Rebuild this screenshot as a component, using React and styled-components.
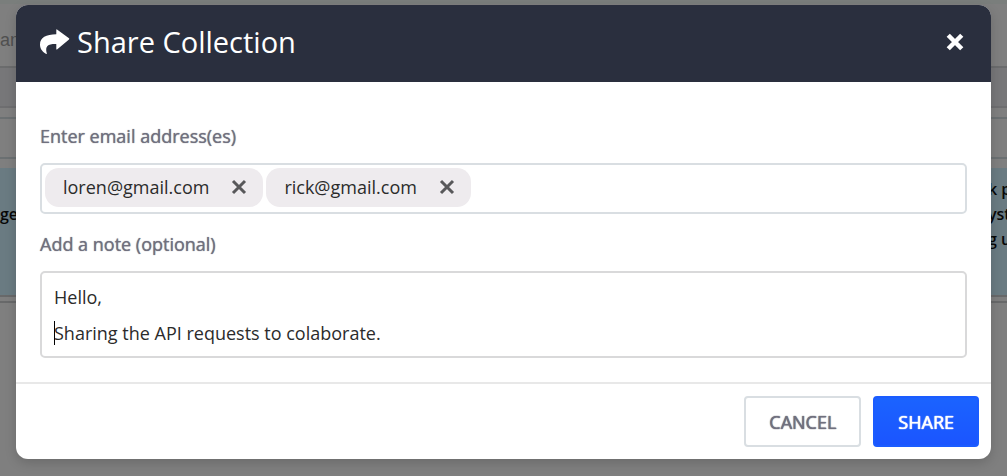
import React from "react";
import styled, { createGlobalStyle } from "styled-components";

const GlobalStyle = createGlobalStyle`
  * { box-sizing: border-box; }
  body {
    margin: 0;
    background: #7f7f7f;
    font-family: "Open Sans", "Noto Sans", sans-serif;
    font-size: 18px;
    color: #2b2b2b;
  }
  button, input, textarea { font: inherit; }
`;

const Page = styled.div`
  position: relative;
  min-height: 100vh;
  overflow: hidden;
`;

const Backdrop = styled.div`
  position: absolute;
  inset: 0;
  display: flex;
  flex-direction: column;
`;

const Band = styled.div`
  flex: none;
  display: flex;
  justify-content: space-between;
  align-items: flex-start;
  height: ${(p) => p.$height}px;
  padding-top: ${(p) => p.$top || 0}px;
  background: ${(p) => p.$color || "#7f7f7f"};
  border-bottom: ${(p) => (p.$line ? `2px solid ${p.$line}` : "0")};
`;

const Muted = styled.span`
  font-family: "Liberation Sans", sans-serif;
  line-height: 25px;
  color: #505050;
`;

const Cell = styled.div`
  flex: none;
  width: 19px;
  font-size: 16px;
  font-weight: 600;
  line-height: 25px;
  color: #080808;
  white-space: nowrap;
`;

const Overlay = styled.div`
  position: relative;
  padding: 5px 16px 17px;
`;

const Dialog = styled.form`
  border-radius: 12px;
  background: #fff;
  overflow: hidden;
  box-shadow: 0 4px 12px rgba(0, 0, 0, 0.16);
`;

const Header = styled.header`
  display: flex;
  align-items: center;
  height: 77px;
  padding: 0 27px 3px 24px;
  gap: 7px;
  background: #2a2f3e;
  color: #fff;
`;

const Title = styled.h1`
  flex: 1;
  margin: 0;
  font-size: 29px;
  font-weight: 400;
  line-height: 40px;
`;

const IconButton = styled.button`
  display: flex;
  padding: 0;
  border: 0;
  background: none;
  color: ${(p) => p.$color};
  cursor: pointer;
`;

const Body = styled.div`
  display: flex;
  flex-direction: column;
  padding: 42px 24px 24px;
`;

const Label = styled.label`
  margin-bottom: 14px;
  line-height: 25px;
  color: #70707e;
  text-shadow: 0 0 1px currentColor;
`;

const TagField = styled.div`
  display: flex;
  align-items: flex-start;
  gap: 3px;
  height: 51px;
  margin-bottom: 18px;
  padding: 3px;
  border: 2px solid #d9dee2;
  border-radius: 5px;
`;

const Tag = styled.span`
  display: flex;
  align-items: center;
  gap: 22px;
  height: 39px;
  padding: 0 16px 2px 18px;
  border-radius: 14px;
  background: #eeebee;
`;

const TagInput = styled.input`
  flex: 1;
  min-width: 0;
  height: 39px;
  border: 0;
  outline: 0;
  background: none;
`;

const NoteWrap = styled.div`
  position: relative;
  display: flex;
`;

const Note = styled.textarea`
  width: 100%;
  height: 87px;
  padding: 6px 12px 4px;
  border: 2px solid #d9d9da;
  border-radius: 5px;
  outline: 0;
  resize: none;
  overflow: hidden;
  line-height: 36px;
  color: inherit;
`;

const Caret = styled.span`
  position: absolute;
  left: 14px;
  top: 50px;
  width: 1px;
  height: 24px;
  background: #000;
`;

const Footer = styled.footer`
  display: flex;
  justify-content: flex-end;
  gap: 12px;
  padding: 12px;
  border-top: 2px solid #e8e8e8;
`;

const Button = styled.button`
  height: 51px;
  padding: 0 23px;
  border: 2px solid ${(p) => (p.$primary ? "#1b5cff" : "#d9dee2")};
  border-radius: 4px;
  background: ${(p) => (p.$primary ? "linear-gradient(#1b63ff, #1b55ff)" : "#fff")};
  color: ${(p) => (p.$primary ? "#fff" : "#70707e")};
  text-shadow: 0 0 1px currentColor, 0 0 1px currentColor;
  cursor: pointer;
`;

function ShareIcon() {
  return (
    <svg width="30" height="26" viewBox="0 0 30 26" fill="currentColor" aria-hidden="true">
      <path d="M17 .4 29 9.3Q29.600 9.900 29 10.500L17 20.500Q16.300 20.800 16.300 20V15.100C8 14.900 4.800 17 6.800 24.400Q6.800 25.500 5.800 24.800C1.500 22 0 19 0 15.500C0 8.500 6 5.300 16.300 5.200V.9Q16.300 0 17 .4Z" />
    </svg>
  );
}

function Cross({ size, stroke, cap = "butt" }) {
  return (
    <svg width={size} height={size} viewBox="0 0 16 16" stroke="currentColor" strokeWidth={stroke} strokeLinecap={cap} aria-hidden="true">
      <path d="M2 2 14 14M14 2 2 14" />
    </svg>
  );
}

const EMAILS = ["loren@gmail.com", "rick@gmail.com"];

export default function App() {
  return (
    <Page>
      <GlobalStyle />
      <Backdrop aria-hidden="true">
        <Band $height={4} $color="#7a7e7c" />
        <Band $height={64} $top={24} $line="#6b6c6d">
          <Muted>am</Muted>
        </Band>
        <Band $height={40} $color="#777779" $line="#6e6e70" />
        <Band $height={11} $line="#6b7072" />
        <Band $height={40} $line="#6b7072" />
        <Band $height={9} />
        <Band $height={129} $top={9} $color="#6a7b82" $line="#68696a">
          <Cell>
            <br />
            ge
          </Cell>
          <Cell>
            k p
            <br />
            yst
            <br />
            g u
          </Cell>
        </Band>
        <Band $height={6} $line="#68696a" />
      </Backdrop>
      <Overlay>
        <Dialog role="dialog" aria-labelledby="share-title" onSubmit={(e) => e.preventDefault()}>
          <Header>
            <ShareIcon />
            <Title id="share-title">Share Collection</Title>
            <IconButton type="button" $color="#fff" aria-label="Close">
              <Cross size={18} stroke={4} />
            </IconButton>
          </Header>
          <Body>
            <Label htmlFor="emails">Enter email address(es)</Label>
            <TagField>
              {EMAILS.map((email) => (
                <Tag key={email}>
                  {email}
                  <IconButton type="button" $color="#58585a" aria-label={`Remove ${email}`}>
                    <Cross size={16} stroke={3} />
                  </IconButton>
                </Tag>
              ))}
              <TagInput id="emails" type="text" />
            </TagField>
            <Label htmlFor="note">Add a note (optional)</Label>
            <NoteWrap>
              <Note id="note" defaultValue={"Hello,\nSharing the API requests to colaborate."} />
              <Caret />
            </NoteWrap>
          </Body>
          <Footer>
            <Button type="button">CANCEL</Button>
            <Button type="submit" $primary>
              SHARE
            </Button>
          </Footer>
        </Dialog>
      </Overlay>
    </Page>
  );
}
